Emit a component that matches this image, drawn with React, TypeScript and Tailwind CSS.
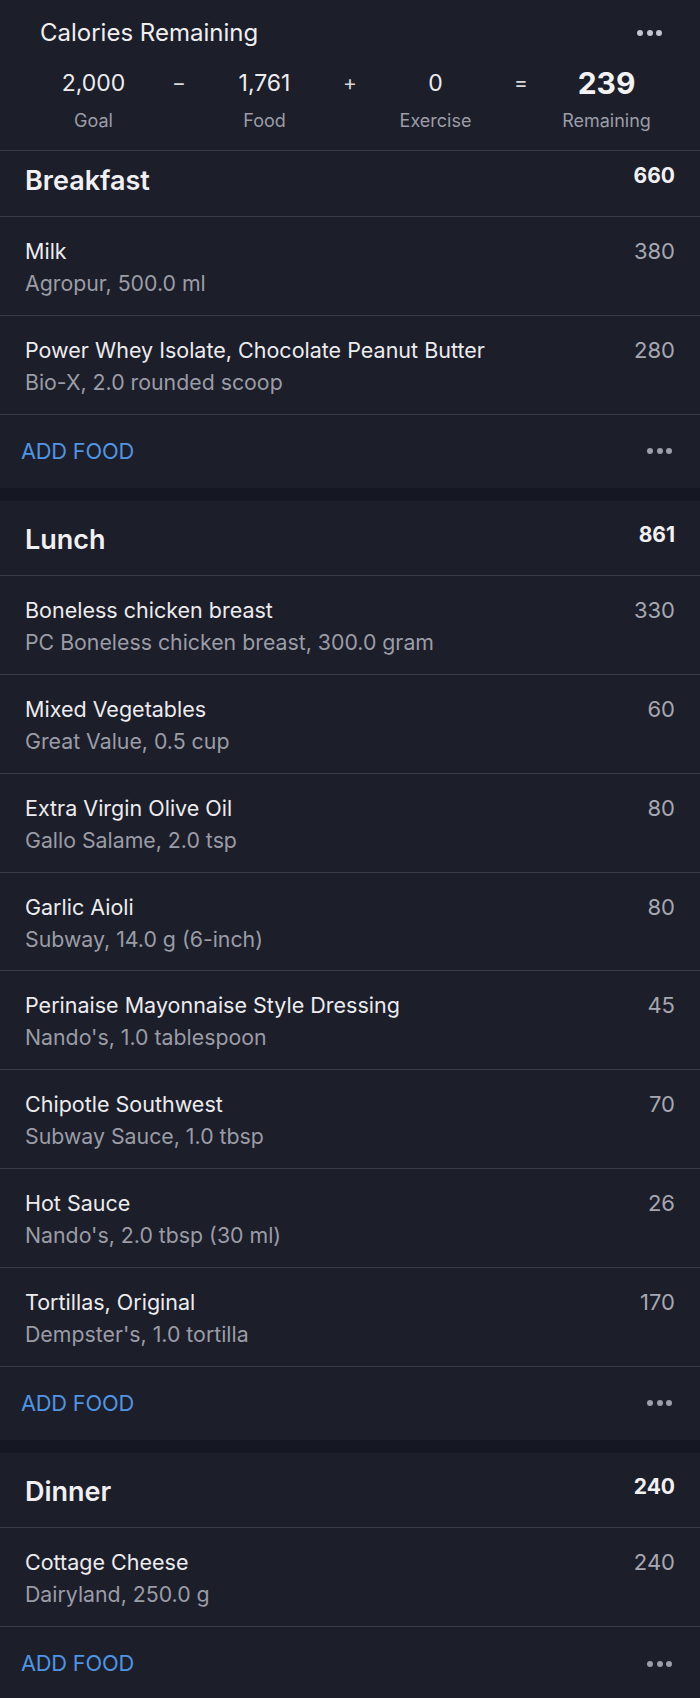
import React from 'react'

interface FoodItem {
  name: string
  detail: string
  calories: number
}

interface Meal {
  title: string
  total: number
  items: FoodItem[]
}

const meals: Meal[] = [
  {
    title: 'Breakfast',
    total: 660,
    items: [
      { name: 'Milk', detail: 'Agropur, 500.0 ml', calories: 380 },
      { name: 'Power Whey Isolate, Chocolate Peanut Butter', detail: 'Bio-X, 2.0 rounded scoop', calories: 280 },
    ],
  },
  {
    title: 'Lunch',
    total: 861,
    items: [
      { name: 'Boneless chicken breast', detail: 'PC Boneless chicken breast, 300.0 gram', calories: 330 },
      { name: 'Mixed Vegetables', detail: 'Great Value, 0.5 cup', calories: 60 },
      { name: 'Extra Virgin Olive Oil', detail: 'Gallo Salame, 2.0 tsp', calories: 80 },
      { name: 'Garlic Aioli', detail: 'Subway, 14.0 g (6-inch)', calories: 80 },
      { name: 'Perinaise Mayonnaise Style Dressing', detail: "Nando's, 1.0 tablespoon", calories: 45 },
      { name: 'Chipotle Southwest', detail: 'Subway Sauce, 1.0 tbsp', calories: 70 },
      { name: 'Hot Sauce', detail: "Nando's, 2.0 tbsp (30 ml)", calories: 26 },
      { name: 'Tortillas, Original', detail: "Dempster's, 1.0 tortilla", calories: 170 },
    ],
  },
  {
    title: 'Dinner',
    total: 240,
    items: [{ name: 'Cottage Cheese', detail: 'Dairyland, 250.0 g', calories: 240 }],
  },
]

function Dots({ light = false }: { light?: boolean }) {
  const dot = light ? 'bg-[#c4c6cf]' : 'bg-[#9c9ea9]'
  return (
    <div className="flex items-center gap-[3.5px]">
      <span className={`block w-[6px] h-[6px] rounded-full ${dot}`} />
      <span className={`block w-[6px] h-[6px] rounded-full ${dot}`} />
      <span className={`block w-[6px] h-[6px] rounded-full ${dot}`} />
    </div>
  )
}

function Stat({ value, label, strong = false }: { value: string; label: string; strong?: boolean }) {
  return (
    <div className="flex-1 flex flex-col items-center">
      <div className={`h-[36px] flex items-center ${strong ? 'text-[30px] font-bold text-[#f2f2f4]' : 'text-[23px] text-[#ececef]'}`}>
        {value}
      </div>
      <div className="mt-[1px] h-[36px] flex items-center text-[18px] text-[#9b9da7]">{label}</div>
    </div>
  )
}

function Operator({ sign }: { sign: string }) {
  return <div className="w-6 h-[36px] flex items-center justify-center text-[21px] text-[#d6d7dc]">{sign}</div>
}

function MealSection({ meal, first }: { meal: Meal; first: boolean }) {
  return (
    <section className="bg-[#1c1e2a]">
      <div
        className={`flex justify-between px-[25px] border-b border-[#383b46] ${first ? 'h-[66px]' : 'h-[75px]'}`}
      >
        <div className={`text-[27px] font-semibold text-[#f0f0f3] leading-[32px] ${first ? 'mt-[14px]' : 'mt-[23px]'}`}>
          {meal.title}
        </div>
        <div className={`text-[21px] font-bold text-[#f0f0f3] leading-[28px] ${first ? 'mt-[10.5px]' : 'mt-[19.5px]'}`}>
          {meal.total}
        </div>
      </div>
      {meal.items.map((item) => (
        <div key={item.name} className="h-[98.8px] flex justify-between px-[25px] border-b border-[#383b46]">
          <div className="pt-[20px] min-w-0">
            <div className="text-[21.5px] leading-[28px] text-[#ececef] truncate">{item.name}</div>
            <div className="mt-[4px] text-[21.3px] leading-[28px] text-[#9a9ca6] truncate">{item.detail}</div>
          </div>
          <div className="pt-[20px] text-[22px] leading-[28px] text-[#a6a8b1]">{item.calories}</div>
        </div>
      ))}
      <div className="h-[73.6px] flex items-center justify-between pl-[21px] pr-[28px]">
        <button className="text-[21.8px] text-[#4f95e3] tracking-[-0.2px]">ADD FOOD</button>
        <Dots />
      </div>
    </section>
  )
}

export default function App() {
  return (
    <div className="w-[700px] min-h-screen bg-[#151823] font-['Inter',sans-serif]">
      <header className="h-[151px] bg-[#1c1e2a] border-b border-[#383b46]">
        <div className="flex items-center justify-between pl-[40px] pr-[38px] pt-[16px] h-[49px]">
          <h1 className="text-[24px] text-[#efeff2]">Calories Remaining</h1>
          <Dots light />
        </div>
        <div className="flex px-[20px] mt-[16px]">
          <Stat value="2,000" label="Goal" />
          <Operator sign="−" />
          <Stat value="1,761" label="Food" />
          <Operator sign="+" />
          <Stat value="0" label="Exercise" />
          <Operator sign="=" />
          <Stat value="239" label="Remaining" strong />
        </div>
      </header>
      <div className="flex flex-col gap-[13px]">
        {meals.map((meal, i) => (
          <MealSection key={meal.title} meal={meal} first={i === 0} />
        ))}
      </div>
    </div>
  )
}
